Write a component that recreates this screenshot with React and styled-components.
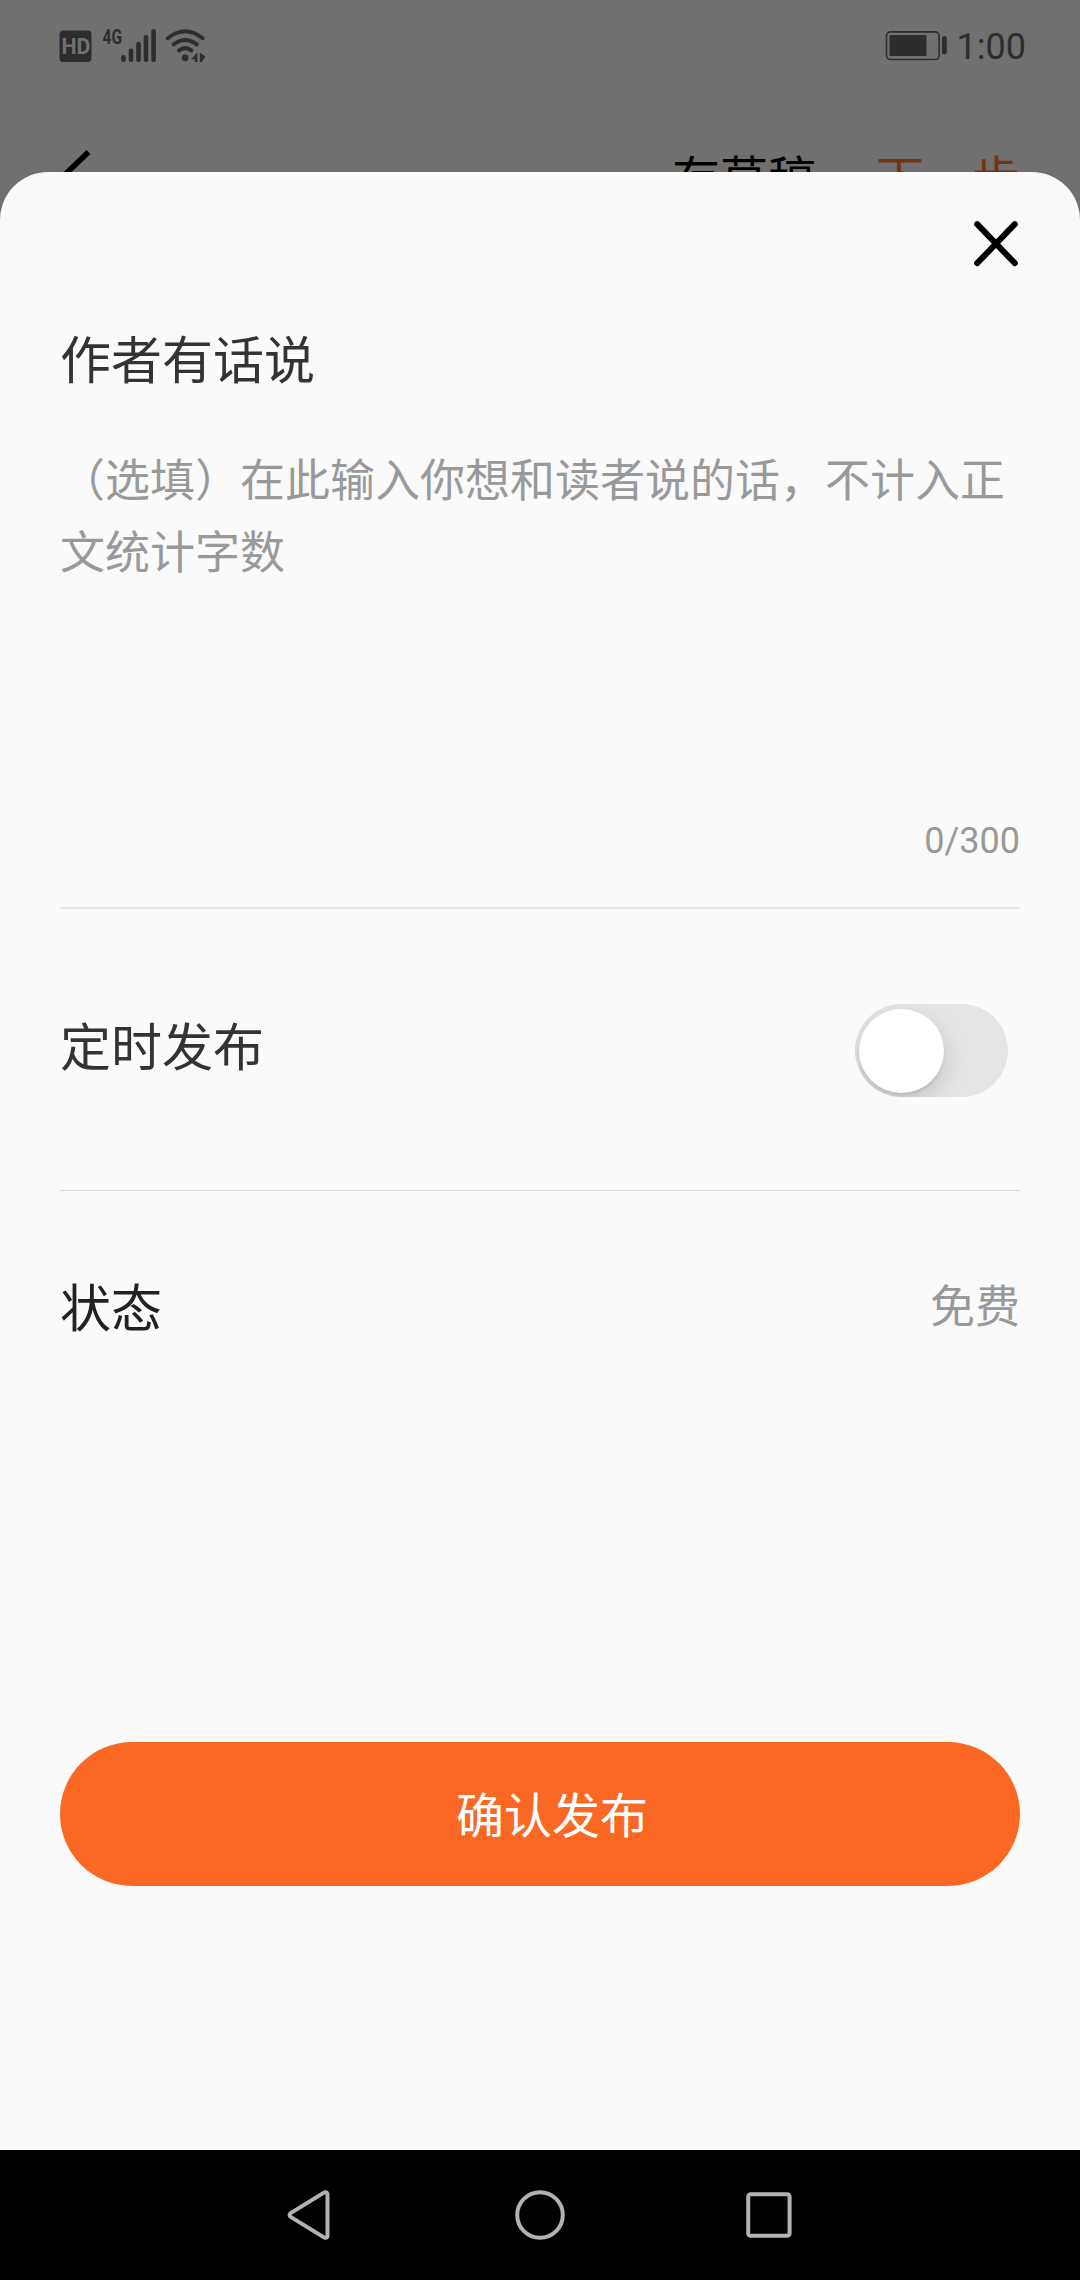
import React, { useState } from "react";
import styled, { createGlobalStyle } from "styled-components";

const App = () => {
  const [isTimed, setIsTimed] = useState(false);
  const [words, setWords] = useState("");

  return (
    <Screen>
      <GlobalStyle />
      <Backdrop>
        <StatusBar>
          <SignalIcons />
          <StatusRight>
            <Battery />
            <Clock>1:00</Clock>
          </StatusRight>
        </StatusBar>
        <TopBar>
          <BackArrow />
          <TopActions>
            <TopAction>存草稿</TopAction>
            <TopAction $primary>下一步</TopAction>
          </TopActions>
        </TopBar>
      </Backdrop>

      <Sheet>
        <CloseRow>
          <CloseButton aria-label="关闭">
            <svg width="46" height="48" viewBox="0 0 46 48">
              <path
                d="M4.2 4.2 41.8 43.2M41.8 4.2 4.2 43.2"
                stroke="#000"
                strokeWidth="6"
                strokeLinecap="round"
              />
            </svg>
          </CloseButton>
        </CloseRow>
        <Title>作者有话说</Title>
        <Words
          value={words}
          maxLength={300}
          onChange={(e) => setWords(e.target.value)}
          placeholder="（选填）在此输入你想和读者说的话，不计入正文统计字数"
        />
        <Counter>{words.length}/300</Counter>
        <TimedRow>
          <Label $lift={13}>定时发布</Label>
          <Switch
            role="switch"
            aria-checked={isTimed}
            onClick={() => setIsTimed(!isTimed)}
          >
            <Knob $on={isTimed} />
          </Switch>
        </TimedRow>
        <StateRow>
          <Label $dark>状态</Label>
          <StateValue>免费</StateValue>
        </StateRow>
        <Confirm>确认发布</Confirm>
      </Sheet>

      <NavBar>
        <NavButton aria-label="返回">
          <svg width="54" height="54" viewBox="0 0 54 54">
            <path d="M9 24.9 42 4.6Q45 3.4 45.5 6V48Q45 50.6 42 49.4L9 29.1Q6 27 9 24.9Z" />
          </svg>
        </NavButton>
        <NavButton aria-label="主页">
          <svg width="54" height="54" viewBox="0 0 54 54">
            <circle cx="27" cy="27" r="22.8" />
          </svg>
        </NavButton>
        <NavButton aria-label="最近">
          <svg width="54" height="54" viewBox="0 0 54 54">
            <rect x="4.2" y="6.2" width="41.4" height="41.6" rx="2.4" />
          </svg>
        </NavButton>
      </NavBar>
    </Screen>
  );
};

export default App;

const SignalIcons = () => (
  <svg width="150" height="40" viewBox="58 25 150 40" fill="#2d2d2d">
    <rect x="59.5" y="29.5" width="32" height="31.5" rx="4" />
    <text
      x="76"
      y="53.2"
      fill="#707070"
      fontFamily="Roboto, sans-serif"
      fontWeight="700"
      fontSize="21.5"
      textLength="29"
      lengthAdjust="spacingAndGlyphs"
      textAnchor="middle"
    >
      HD
    </text>
    <text
      x="102.6"
      y="42.8"
      fontFamily="Roboto, sans-serif"
      fontWeight="700"
      fontSize="20.5"
      textLength="19.5"
      lengthAdjust="spacingAndGlyphs"
    >
      4G
    </text>
    <rect x="121.2" y="54" width="4.6" height="7" rx="2.2" />
    <rect x="128.7" y="47.4" width="4.6" height="13.6" rx="2.2" />
    <rect x="136.2" y="40.7" width="4.6" height="20.3" rx="2.2" />
    <rect x="143.7" y="34" width="4.6" height="27" rx="2.2" />
    <rect x="151.3" y="28" width="4.6" height="33" rx="2.2" />
    <g fill="none" stroke="#2d2d2d" strokeWidth="4" strokeLinecap="round">
      <path d="M167.8 37.2Q185.2 23.2 202.6 37.2" />
      <path d="M173.6 43.4Q185.2 34.6 196.8 43.4" />
      <path d="M179 49.4Q185.2 44.8 191.4 49.4" />
    </g>
    <circle cx="185.2" cy="56.8" r="3.4" />
    <path d="M197.4 51.4V61H194.8V58.2H191.2ZM199.8 51.4 205.4 55.4 201.6 61H199.8Z" />
  </svg>
);

const Battery = () => (
  <svg width="64" height="32" viewBox="885 30 64 32" fill="#2d2d2d">
    <rect
      x="886.5"
      y="31.9"
      width="52.6"
      height="27.6"
      rx="4"
      fill="none"
      stroke="#2d2d2d"
      strokeWidth="1.6"
    />
    <rect x="889.5" y="35" width="37" height="21" rx="1" />
    <rect x="942" y="36" width="4.8" height="18.5" rx="2.2" />
  </svg>
);

const BackArrow = () => (
  <svg width="34" height="52" viewBox="0 0 34 52">
    <path
      d="M29.5 3 4.5 27 29.5 51"
      fill="none"
      stroke="#000"
      strokeWidth="5.6"
    />
  </svg>
);

const GlobalStyle = createGlobalStyle`
  * {
    box-sizing: border-box;
  }
  body {
    margin: 0;
    background: #707070;
    font-family: Roboto, "Noto Sans CJK SC", sans-serif;
  }
  button {
    padding: 0;
    border: none;
    background: none;
    font-family: inherit;
    cursor: pointer;
  }
  svg {
    display: block;
  }
`;

const Screen = styled.div`
  width: 1080px;
  height: 2280px;
  display: flex;
  flex-direction: column;
  background-color: #707070;
`;

const Backdrop = styled.div`
  height: 172px;
  overflow: hidden;
`;

const StatusBar = styled.div`
  height: 91px;
  padding: 0 54px 0 58px;
  display: flex;
  align-items: center;
  justify-content: space-between;
`;

const StatusRight = styled.div`
  display: flex;
  align-items: center;
  gap: 8px;
`;

const Clock = styled.span`
  padding-top: 2px;
  font-size: 36px;
  line-height: 44px;
  color: #2d2d2d;
`;

const TopBar = styled.div`
  height: 168px;
  padding: 0 60px 0 59px;
  display: flex;
  align-items: center;
  justify-content: space-between;
`;

const TopActions = styled.div`
  display: flex;
  gap: 60px;
`;

const TopAction = styled.span`
  font-family: "Noto Sans CJK SC", sans-serif;
  font-size: 48px;
  line-height: 70px;
  color: ${(props) => (props.$primary ? "#753315" : "#000")};
`;

const Sheet = styled.div`
  flex: 1;
  display: flex;
  flex-direction: column;
  padding: 48px 60px 0;
  border-radius: 48px 48px 0 0;
  background-color: #fafafa;
`;

const CloseRow = styled.div`
  height: 99px;
  display: flex;
  justify-content: flex-end;
  align-items: flex-start;
`;

const CloseButton = styled.button`
  margin-right: 1px;
`;

const Title = styled.h1`
  margin: 0;
  font-family: "Noto Sans CJK SC", sans-serif;
  font-size: 51px;
  font-weight: 400;
  line-height: 76px;
  color: #333;
`;

const Words = styled.textarea`
  display: block;
  width: 100%;
  height: 360px;
  margin-top: 47px;
  padding: 0;
  border: none;
  outline: none;
  resize: none;
  overflow: hidden;
  background: transparent;
  font-family: "Noto Sans CJK SC", sans-serif;
  font-size: 45px;
  line-height: 72px;
  color: #333;

  &::placeholder {
    color: #999;
    opacity: 1;
  }
`;

const Counter = styled.div`
  height: 107px;
  padding-top: 18px;
  border-bottom: 2px solid #e5e5e5;
  font-size: 36px;
  line-height: 42px;
  text-align: right;
  color: #999;
`;

const TimedRow = styled.div`
  height: 282px;
  padding: 2px 12px 0 0;
  display: flex;
  align-items: center;
  justify-content: space-between;
  border-bottom: 1px solid #d8d8d8;
`;

const Label = styled.span`
  padding-bottom: ${(props) => props.$lift || 0}px;
  font-family: "Noto Sans CJK SC", sans-serif;
  font-size: 51px;
  line-height: 76px;
  color: ${(props) => (props.$dark ? "#222" : "#333")};
`;

const Switch = styled.button`
  width: 153px;
  height: 93px;
  padding: 5px 4px 4px;
  display: flex;
  align-items: center;
  border-radius: 47px;
  overflow: hidden;
  background-color: #e5e5e5;
`;

const Knob = styled.span`
  width: 85px;
  height: 84px;
  margin-left: ${(props) => (props.$on ? "60px" : "0")};
  border-radius: 50%;
  background-color: #fff;
  box-shadow: 0 9px 24px rgba(0, 0, 0, 0.15), 0 3px 3px rgba(0, 0, 0, 0.08);
  transition: 0.2s;
`;

const StateRow = styled.div`
  height: 228px;
  display: flex;
  align-items: center;
  justify-content: space-between;
`;

const StateValue = styled.span`
  padding-bottom: 2px;
  font-family: "Noto Sans CJK SC", sans-serif;
  font-size: 45px;
  line-height: 66px;
  color: #999;
`;

const Confirm = styled.button`
  height: 144px;
  margin-top: 323px;
  padding: 0 0 4px 24px;
  border-radius: 72px;
  background-color: #fb6824;
  font-family: "Noto Sans CJK SC", sans-serif;
  font-size: 48px;
  line-height: 70px;
  color: #fff;
`;

const NavBar = styled.nav`
  height: 130px;
  display: flex;
  align-items: center;
  justify-content: center;
  gap: 177px;
  background-color: #000;
`;

const NavButton = styled.button`
  svg {
    fill: none;
    stroke: #b2b2b2;
    stroke-width: 4;
    stroke-linejoin: round;
  }
`;
